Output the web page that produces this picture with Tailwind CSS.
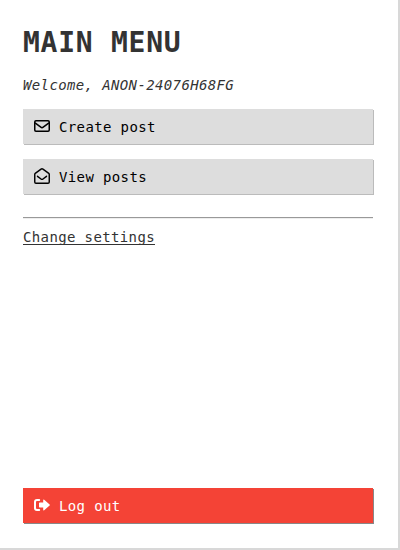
<!DOCTYPE html>
<html lang="en">
<head>
<meta charset="utf-8">
<title>Main menu</title>
<script src="https://cdn.jsdelivr.net/npm/@tailwindcss/browser@4"></script>
</head>
<body class="h-[550px] w-[400px] overflow-hidden bg-white font-['DejaVu_Sans_Mono',monospace] text-[14px] tracking-[0.37px] text-[#333]">
<main class="flex h-full flex-col border-r-2 border-b-2 border-[#d8d8d8] pt-[23px] pr-[25px] pb-[25px] pl-[23px]">
  <h1 class="h-10 text-[28px] leading-10 font-bold tracking-[0.74px] whitespace-nowrap">MAIN MENU</h1>
  <p class="mt-3 h-5 leading-5 italic">Welcome, ANON-24076H68FG</p>
  <button class="mt-[14px] flex h-[35px] shrink-0 items-center gap-[9px] bg-[#ddd] pl-[11px] text-black shadow-[1px_1px_0_#bbb]">
    <svg class="mb-px size-4" viewBox="0 0 16 16" fill="none" stroke="currentColor" stroke-width="1.5" stroke-linejoin="round"><rect x=".75" y="2.75" width="14.500" height="10.500" rx="1.200"/><path d="M1 4.800l5.800 4.400q1.200.9 2.400 0L15 4.800"/></svg>
    <span class="pt-0.5">Create post</span>
  </button>
  <button class="mt-[15px] flex h-[35px] shrink-0 items-center gap-[9px] bg-[#ddd] pl-[11px] text-black shadow-[1px_1px_0_#bbb]">
    <svg class="mb-0.5 size-4" viewBox="0 0 512 512" fill="none" stroke="currentColor" stroke-width="46" stroke-linejoin="round" stroke-linecap="round"><path d="M24 202c0-12 5-22 15-30L226 34q30-20 60 0L473 172c10 8 15 18 15 30V448q0 40-40 40H64q-40 0-40-40Z"/><path d="M112 266l112 86q32 24 64 0l112-86"/></svg>
    <span class="pt-0.5">View posts</span>
  </button>
  <hr class="mt-[23px] h-0.5 border-t border-b border-t-[#999] border-b-[#eee]">
  <a href="#" class="mt-2 h-5 self-start leading-5 underline decoration-1 underline-offset-2 [text-decoration-skip-ink:none]">Change settings</a>
  <button class="mt-auto flex h-[35px] shrink-0 items-center gap-[9px] bg-[#f44336] pl-[11px] text-white shadow-[1px_1px_0_#888]">
    <svg class="mb-0.5 size-4" viewBox="0 0 16 16" fill="currentColor"><path d="M5.200 3H3Q1 3 1 5v6q0 2 2 2h2.200" fill="none" stroke="currentColor" stroke-width="2" stroke-linecap="round"/><path d="M5 6.200q0-.7.700-.7H9.200V3.300q0-1.200 1-.5l5.400 4.600q.6.600 0 1.200l-5.400 4.600q-1 .7-1-.5v-2.200H5.700q-.7 0-.7-.7z"/></svg>
    <span class="pt-0.5">Log out</span>
  </button>
</main>
</body>
</html>
